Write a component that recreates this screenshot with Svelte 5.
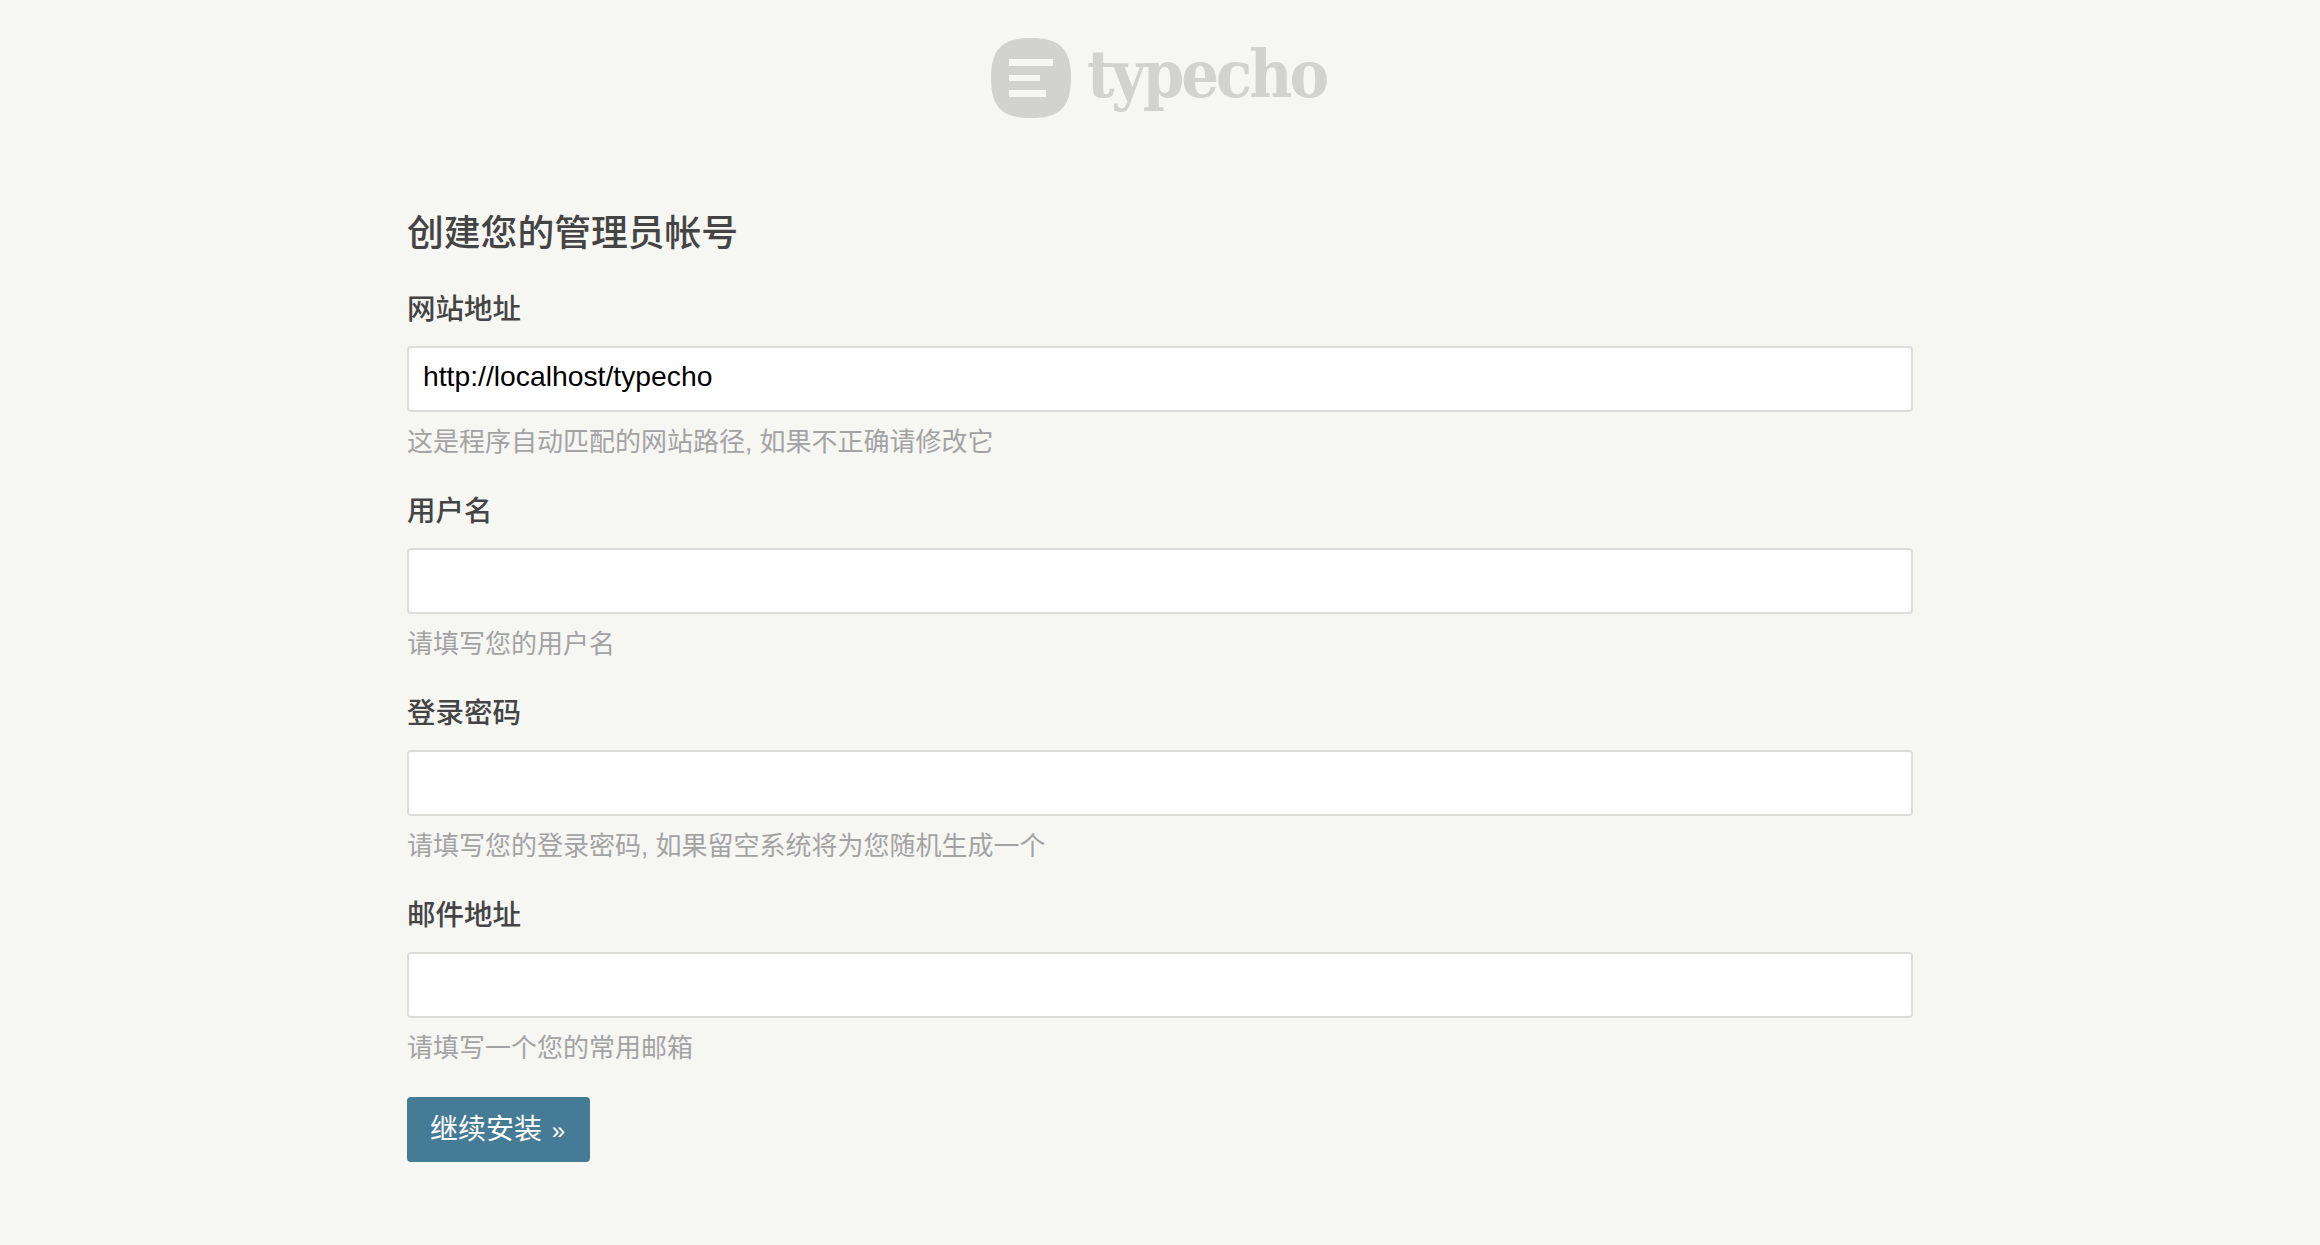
<script>
  const fields = [
    { label: "网站地址", value: "http://localhost/typecho", hint: "这是程序自动匹配的网站路径, 如果不正确请修改它" },
    { label: "用户名", value: "", hint: "请填写您的用户名" },
    { label: "登录密码", value: "", hint: "请填写您的登录密码, 如果留空系统将为您随机生成一个" },
    { label: "邮件地址", value: "", hint: "请填写一个您的常用邮箱" }
  ];
</script>

<div class="page">
  <header class="logo">
    <svg width="80" height="80" viewBox="0 0 80 80" aria-hidden="true">
      <path d="M40 0C68 0 80 10 80 40C80 70 68 80 40 80C12 80 0 70 0 40C0 10 12 0 40 0Z" fill="#d2d3cf" />
      <rect x="18" y="21" width="44" height="7" fill="#f6f6f3" />
      <rect x="18" y="37" width="31" height="6" fill="#f6f6f3" />
      <rect x="18" y="52" width="37" height="7" fill="#f6f6f3" />
    </svg>
    <span class="logo-text">typecho</span>
  </header>

  <main class="container">
    <h3>创建您的管理员帐号</h3>
    <form>
      {#each fields as field}
        <div class="field">
          <label for={field.label}>{field.label}</label>
          <input id={field.label} type="text" value={field.value} />
          <p class="hint">{field.hint}</p>
        </div>
      {/each}
      <button type="button">继续安装 <span class="arrow">»</span></button>
    </form>
  </main>
</div>

<style>
  :global(body) {
    margin: 0;
    background: #f6f6f3;
    font-family: "Liberation Sans", "Noto Sans CJK SC", sans-serif;
    color: #444;
  }

  .page {
    height: 1245px;
    overflow: hidden;
  }

  .logo {
    display: flex;
    justify-content: center;
    align-items: center;
    gap: 16px;
    padding-top: 38px;
    height: 80px;
  }

  .logo-text {
    font-family: "DejaVu Serif Condensed", "DejaVu Serif", serif;
    font-weight: bold;
    font-size: 66px;
    letter-spacing: -3px;
    color: #d2d3cf;
    line-height: 72px;
    padding: 0 3px 8px 0;
  }

  .container {
    width: 1506px;
    margin: 0 auto;
  }

  h3 {
    font-size: 36.8px;
    font-weight: 500;
    line-height: 50px;
    margin: 91px 0 0;
  }

  .field {
    height: 202px;
  }

  form {
    margin-top: 30px;
  }

  label {
    display: block;
    font-size: 28.5px;
    font-weight: 500;
    line-height: 40px;
    margin-bottom: 17px;
  }

  input {
    display: block;
    box-sizing: border-box;
    width: 100%;
    height: 66px;
    padding: 0 14px 6px;
    border: 2px solid #dcdcd9;
    border-radius: 4px;
    background: #fff;
    font-family: inherit;
    font-size: 28.3px;
    color: #000;
    outline: none;
  }

  .hint {
    margin: 12px 0 0;
    font-size: 26px;
    line-height: 36px;
    color: #a3a3a3;
  }

  button {
    display: block;
    width: 183px;
    height: 65px;
    padding: 0 2px 6px 0;
    border: none;
    border-radius: 4px;
    background: #467b96;
    color: #fff;
    font-family: inherit;
    font-size: 28px;
  }

  .arrow {
    font-size: 24px;
    margin-left: 2px;
  }
</style>
